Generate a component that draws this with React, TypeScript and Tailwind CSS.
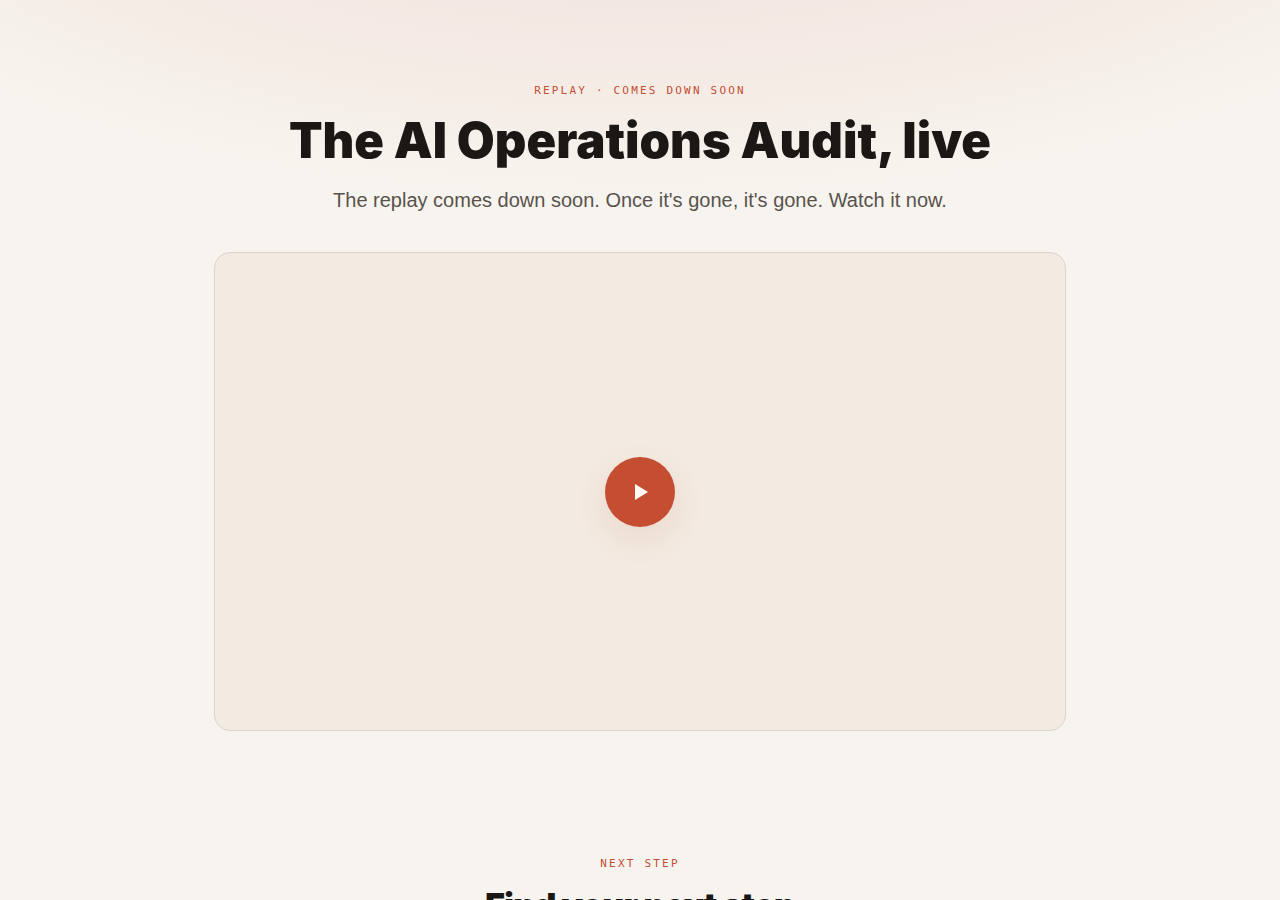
import type { ReactNode } from "react";

const Eyebrow = ({ children }: { children: ReactNode }) => {
    return (
        <p className="font-['DejaVu_Sans_Mono',monospace] text-[11px] leading-4 tracking-[0.2em] text-[#c44d32] uppercase">
            {children}
        </p>
    );
}

const VideoCard = () => {
    return (
        <div className="mt-[38px] flex aspect-video w-full max-w-[852px] items-center justify-center rounded-2xl border border-[#dbd6cc] bg-[#f3eae1]">
            <button
                type="button"
                aria-label="Play the replay"
                className="flex size-[70px] items-center justify-center rounded-full bg-[#c44d32] shadow-[0_12px_32px_rgba(160,80,40,0.11)]"
            >
                <svg width="14" height="18" viewBox="0 0 14 18" className="ml-1" aria-hidden="true">
                    <path d="M0 1 L13 9 L0 17 Z" fill="#fdfaf5" />
                </svg>
            </button>
        </div>
    );
}

const App = () => {
    return (
        <div className="min-h-screen bg-[#f7f4ef] bg-[radial-gradient(75%_400px_at_50%_-200px,#f4e7e3_50%,#f6ede7_77%,#f5f0ea_86%,#f7f4ef_100%)] font-['Liberation_Sans',Arial,sans-serif] text-[#1b1714]">
            <main>
                <section className="flex flex-col items-center px-6 pt-[83px] text-center">
                    <Eyebrow>Replay · Comes down soon</Eyebrow>
                    <h1 className="mt-4 font-['Inter',sans-serif] text-[49px] leading-[52px] font-black">
                        The AI Operations Audit, live
                    </h1>
                    <p className="mt-[19px] text-xl leading-7 text-[#59524c]">
                        The replay comes down soon. Once it's gone, it's gone. Watch it now.
                    </p>
                    <VideoCard />
                </section>

                <section className="flex flex-col items-center px-6 pt-[125px] pb-20 text-center">
                    <Eyebrow>Next step</Eyebrow>
                    <h2 className="mt-4 font-['Inter',sans-serif] text-[34px] leading-9 font-black tracking-tight">
                        Find your next step
                    </h2>
                </section>
            </main>
        </div>
    );
}

export default App;
